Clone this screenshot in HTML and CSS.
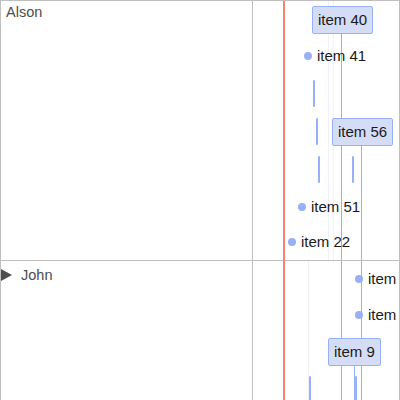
FILE: index.html
```html
<!DOCTYPE html>
<html lang="en">
<head>
  <meta charset="UTF-8" />
  <meta name="viewport" content="width=device-width, initial-scale=1.0">
  <title>Timeline groups</title>
  <link rel="stylesheet" href="styles.css">
</head>
<body>
  <div class="timeline">
    <div class="labels">
      <div class="label group-top"><span class="inner">Alson</span></div>
      <div class="label nested"><span class="arrow"></span><span class="inner">John</span></div>
    </div>

    <div class="center">
      <!-- background lines -->
      <div class="grid-line" style="left: 75px; height: 259px;"></div>
      <div class="grid-line" style="left: 80px; height: 259px;"></div>
      <div class="grid-line" style="left: 55px; top: 260px;"></div>
      <div class="item-line" style="left: 88px; top: 32px;"></div>
      <div class="item-line" style="left: 108px; top: 144px;"></div>
      <div class="item-line" style="left: 101px; top: 364px;"></div>
      <div class="current-time"></div>

      <div class="group group-top">
        <div class="box" style="left: 59px; top: 5px;">item 40</div>
        <div class="point" style="left: 51px; top: 47px;"><span class="dot"></span>item 41</div>
        <div class="range" style="left: 60px; top: 79px;"></div>
        <div class="range" style="left: 63px; top: 117px;"></div>
        <div class="box" style="left: 79px; top: 117px;">item 56</div>
        <div class="range" style="left: 65px; top: 155px;"></div>
        <div class="range" style="left: 99px; top: 155px;"></div>
        <div class="point" style="left: 45px; top: 198px;"><span class="dot"></span>item 51</div>
        <div class="point" style="left: 35px; top: 233px;"><span class="dot"></span>item 22</div>
      </div>

      <div class="group">
        <div class="point" style="left: 102px; top: 10px;"><span class="dot"></span>item 31</div>
        <div class="point" style="left: 102px; top: 46px;"><span class="dot"></span>item 17</div>
        <div class="box" style="left: 75px; top: 77px;">item 9</div>
        <div class="range tall" style="left: 56px; top: 115px;"></div>
        <div class="range tall" style="left: 102px; top: 115px;"></div>
      </div>
    </div>
  </div>
</body>
</html>
```

FILE: styles.css
```css
body {
  margin: 0;
  font-family: "Liberation Sans", Arial, sans-serif;
  font-size: 14.5px;
  background: white;
}

.timeline {
  display: flex;
  width: 400px;
  height: 400px;
  box-sizing: border-box;
  border: 1px solid #bfbfbf;
  border-bottom: none;
  overflow: hidden;
}

.labels {
  width: 251px;
  border-right: 1px solid #bfbfbf;
  color: #4d4d4d;
}

.label {
  display: flex;
  align-items: center;
  padding: 3px 5px;
  line-height: 16px;
}

.label.group-top {
  height: 253px;
  align-items: flex-start;
  border-bottom: 1px solid #bfbfbf;
}

.label.nested {
  padding: 6px 5px 3px 0;
}

.arrow {
  width: 0;
  height: 0;
  border-left: 11px solid #4d4d4d;
  border-top: 6px solid transparent;
  border-bottom: 6px solid transparent;
  margin-right: 9px;
}

.center {
  flex: 1;
  position: relative;
  overflow: hidden;
}

.group {
  position: relative;
  height: 180px;
}

.group.group-top {
  height: 259px;
  border-bottom: 1px solid #bfbfbf;
}

.grid-line {
  position: absolute;
  top: 0;
  width: 1px;
  height: 200px;
  background: #f0f1f8;
}

.item-line {
  position: absolute;
  width: 1px;
  height: 420px;
  background: #97b0f8;
}

.current-time {
  position: absolute;
  left: 30px;
  top: 0;
  width: 2px;
  height: 100%;
  background: #ff7f6e;
  z-index: 2;
}

.box {
  position: absolute;
  padding: 5px;
  font-size: 15px;
  line-height: 16px;
  border: 1px solid #97b0f8;
  border-radius: 2px;
  background: #d5ddf6;
  color: #1a1a1a;
  white-space: nowrap;
}

.point {
  position: absolute;
  display: flex;
  align-items: center;
  height: 16px;
  font-size: 15px;
  line-height: 16px;
  color: #1a1a1a;
  white-space: nowrap;
}

.dot {
  width: 8px;
  height: 8px;
  border-radius: 50%;
  background: #97b0f8;
  margin-right: 5px;
}

.range {
  position: absolute;
  width: 2px;
  height: 27px;
  background: #97b0f8;
  border-radius: 1px;
}

.range.tall {
  height: 40px;
}
```
